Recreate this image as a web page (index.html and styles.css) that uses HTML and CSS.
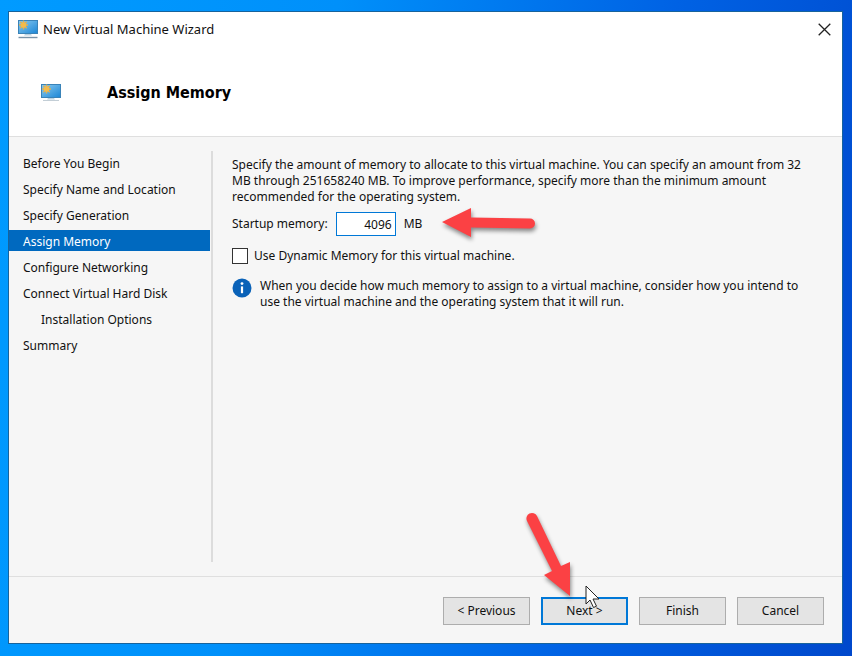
FILE: index.html
```html
<!DOCTYPE html>
<html lang="en">
  <head>
    <meta charset="UTF-8" />
    <meta name="viewport" content="width=device-width, initial-scale=1.0" />
    <title>New Virtual Machine Wizard</title>
    <link rel="stylesheet" href="styles.css">
  </head>
  <body>
    <svg class="defs" width="0" height="0" aria-hidden="true">
      <defs>
        <linearGradient id="screen" x1="0" y1="0" x2="1" y2="1">
          <stop offset="0" stop-color="#8ccbf0" />
          <stop offset="1" stop-color="#1b86d6" />
        </linearGradient>
        <symbol id="monitor" viewBox="0 0 20 19">
          <rect x="0.5" y="0.5" width="19" height="13" fill="url(#screen)" stroke="#3a83b8" />
          <path d="M5.500 0.500v9M1 5h9M2.300 1.800l6.400 6.400M8.700 1.800L2.300 8.200" stroke="#e0b050" stroke-width="1.500" />
          <circle cx="5.500" cy="5" r="2.800" fill="#f5bb4a" />
          <path d="M7 14h6l1 1.5H6z" fill="#b9d2e2" />
        </symbol>
      </defs>
    </svg>

    <main class="wizard">
      <div class="titlebar">
        <svg class="app_icon" viewBox="0 0 20 19">
          <use href="#monitor" />
          <path d="M0.5 17.500h19" stroke="#7893a8" stroke-width="1.4" />
        </svg>
        <span>New Virtual Machine Wizard</span>
        <button class="close" aria-label="Close">
          <svg width="13" height="13" viewBox="0 0 13 13"><path d="M0.7 0.7l11.6 11.6M12.3 0.7L0.7 12.3" stroke="#222" stroke-width="1.3" /></svg>
        </button>
      </div>

      <header>
        <svg class="page_icon" viewBox="0 0 20 19">
          <use href="#monitor" />
          <path d="M2 16.500h16" stroke="#c3ced6" />
        </svg>
        <h1>Assign Memory</h1>
      </header>

      <div class="content">
        <nav>
          <a href="#">Before You Begin</a>
          <a href="#">Specify Name and Location</a>
          <a href="#">Specify Generation</a>
          <a href="#" class="selected">Assign Memory</a>
          <a href="#">Configure Networking</a>
          <a href="#">Connect Virtual Hard Disk</a>
          <a href="#" class="sub">Installation Options</a>
          <a href="#">Summary</a>
        </nav>

        <section class="page">
          <p>Specify the amount of memory to allocate to this virtual machine. You can specify an amount from 32 MB through 251658240 MB. To improve performance, specify more than the minimum amount recommended for the operating system.</p>
          <div class="memory">
            <label for="memory">Startup memory:</label>
            <input type="text" id="memory" value="4096" />
            <span>MB</span>
          </div>
          <div class="dynamic">
            <input type="checkbox" id="dynamic" />
            <label for="dynamic">Use Dynamic Memory for this virtual machine.</label>
          </div>
          <div class="info">
            <svg width="20" height="20" viewBox="0 0 20 20">
              <circle cx="10" cy="10" r="9.5" fill="#0a62b8" />
              <circle cx="10" cy="5.6" r="1.4" fill="#fff" />
              <path d="M10 8.4v6.8" stroke="#fff" stroke-width="2.2" />
            </svg>
            <p>When you decide how much memory to assign to a virtual machine, consider how you intend to use the virtual machine and the operating system that it will run.</p>
          </div>
        </section>
      </div>

      <footer>
        <button>&lt; Previous</button>
        <button class="default">Next &gt;</button>
        <button>Finish</button>
        <button>Cancel</button>
      </footer>

      <!-- arrows and mouse pointer on top of the window -->
      <svg class="arrow_memory" width="104" height="44" viewBox="0 0 104 44">
        <path d="M3 17L32 3V12.500L91 13.500A5 5 0 0 1 91 23.500L32 22.500V32z" fill="#fb4144" />
      </svg>
      <svg class="arrow_next" width="60" height="96" viewBox="0 0 60 96">
        <path d="M46 86L20 65L28 61L3 11A5 5 0 0 1 13 6L37 56L46 52z" fill="#fb4144" />
      </svg>
      <svg class="pointer" width="16" height="24" viewBox="0 0 16 24">
        <path d="M1 1v18l4-4 3.500 7.500 3-1.300L8 14h6z" fill="#fff" stroke="#222" />
      </svg>
    </main>
  </body>
</html>
```

FILE: styles.css
```css
* {
  box-sizing: border-box;
}
body {
  margin: 0;
  height: 100vh;
  padding: 11px 9px 12px 8px;
  display: flex;
  background: linear-gradient(100deg, #009bff 0%, #0090fa 35%, #0062e4 70%, #0048cc 100%);
  font-family: "Noto Sans", "Open Sans", sans-serif;
  font-size: 12px;
  line-height: 16px;
  color: #111;
}
p,
h1 {
  margin: 0;
}
button {
  font: inherit;
  color: inherit;
}
.defs {
  position: absolute;
}

.wizard {
  position: relative;
  flex: 1;
  display: flex;
  flex-direction: column;
  background-color: #f6f6f6;
  border: 1px solid #17639c;
}

/*top*/
.titlebar {
  display: flex;
  align-items: center;
  gap: 5px;
  height: 34px;
  padding: 0 11px 0 9px;
  background-color: white;
  font-size: 13px;
}
.app_icon,
.page_icon {
  width: 20px;
  height: 19px;
}
.close {
  margin-left: auto;
  padding: 0;
  display: flex;
  border: none;
  background: none;
}
header {
  display: flex;
  align-items: center;
  gap: 46px;
  height: 91px;
  padding: 4px 32px 0;
  background-color: white;
  border-bottom: 1px solid #dfdfdf;
}
h1 {
  font-family: "DejaVu Sans Condensed", "DejaVu Sans", sans-serif;
  font-size: 16px;
  line-height: 24px;
  color: black;
}

/*steps and page*/
.content {
  flex: 1;
  display: flex;
  padding: 14px 24px 14px 0;
}
nav {
  width: 204px;
  display: flex;
  flex-direction: column;
  gap: 5px;
  padding: 1px 1px 0 0;
  border-right: 2px solid #dcdcdc;
}
nav a {
  padding: 4px 14px 1px;
  color: inherit;
  text-decoration: none;
}
nav .sub {
  padding-left: 32px;
}
nav .selected {
  background-color: #0069bf;
  color: white;
}
.page {
  flex: 1;
  padding: 6px 0 0 19px;
}
.memory {
  display: flex;
  align-items: center;
  gap: 8px;
  margin-top: 7px;
}
.memory input {
  width: 60px;
  height: 24px;
  padding: 0 3px;
  border: 1px solid #0078d7;
  background-color: white;
  font: inherit;
  color: inherit;
  text-align: right;
}
.dynamic {
  display: flex;
  align-items: center;
  gap: 6px;
  margin-top: 12px;
}
.dynamic input {
  appearance: none;
  width: 16px;
  height: 16px;
  margin: 0;
  border: 1px solid #333;
  background-color: white;
}
.info {
  display: flex;
  align-items: flex-start;
  gap: 8px;
  margin-top: 14px;
}
.info svg {
  flex: none;
}

/*buttons*/
footer {
  display: flex;
  justify-content: flex-end;
  gap: 11px;
  padding: 20px 18px 18px;
  border-top: 1px solid #dfdfdf;
}
footer button {
  width: 87px;
  height: 28px;
  padding: 0;
  border: 1px solid #adadad;
  background-color: #e4e4e4;
}
footer .default {
  border: 2px solid #0078d7;
}

/*overlay*/
.arrow_memory,
.arrow_next,
.pointer {
  position: absolute;
  pointer-events: none;
}
.arrow_memory,
.arrow_next {
  filter: drop-shadow(1px 3px 2px rgba(0, 0, 0, 0.45));
}
.arrow_memory {
  left: 430px;
  top: 193px;
}
.arrow_next {
  right: 258px;
  bottom: 37px;
}
.pointer {
  right: 241px;
  bottom: 34px;
}
```
